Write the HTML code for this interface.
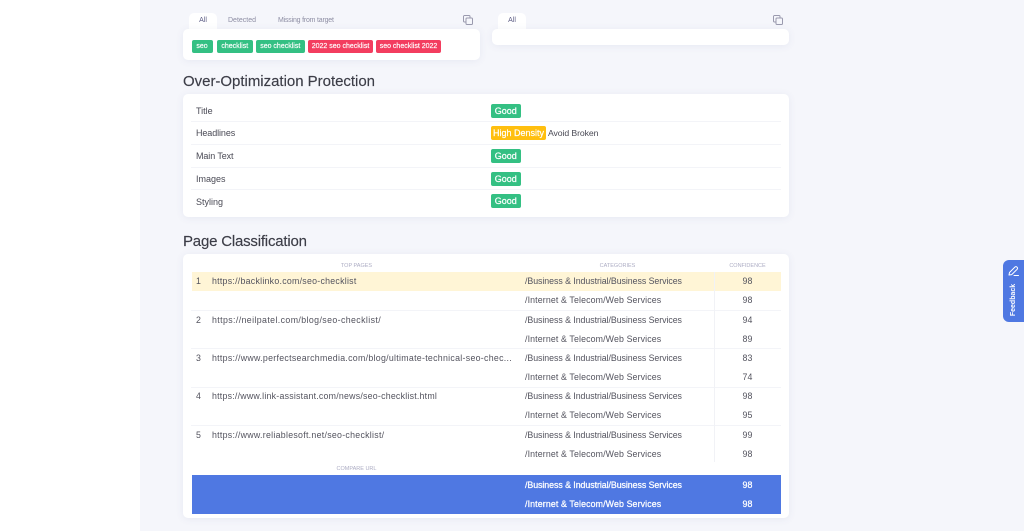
<!DOCTYPE html>
<html lang="en"><head><meta charset="utf-8"><title>Page Classification</title>
<style>
html,body{margin:0;padding:0;width:1024px;height:531px;overflow:hidden;background:#fff}
body{position:relative;font-family:"Liberation Sans",sans-serif;color:#4a4a55}
div,span.a{position:absolute;white-space:nowrap}
#bg{left:140px;top:0;width:884px;height:531px;background:#f5f6fb}
.card{background:#fff;border-radius:5px;box-shadow:0 1px 8px rgba(90,100,150,.09)}
.tab{background:#fff;border-radius:5px 5px 0 0;height:16px}
.tt{font-size:7px;color:#8d8da3;line-height:10px;height:10px}
.b{height:13px;border-radius:2px;color:#fff;font-size:7px;line-height:13px;text-align:center;top:39.5px;-webkit-text-stroke:.15px #fff}
.g{background:#34c083}.r{background:#f33d5f}
h2{position:absolute;margin:0;font-weight:normal;font-size:15px;line-height:18px;color:#3c3d47;white-space:nowrap;-webkit-text-stroke:.15px #3c3d47}
.l{left:196px;font-size:9px;line-height:12px;color:#4a4a55}
.s{font-size:9px;line-height:14px;height:14px;color:#fff;border-radius:2px;text-align:center;left:491px;-webkit-text-stroke:.2px #fff}
.sg{background:#34c083;width:29.5px}
.ln{height:1px;background:#f3f4f8}
.th{font-size:5.5px;line-height:8px;color:#adadc4;text-align:center}
.t{font-size:8.8px;line-height:12px;color:#53535e;letter-spacing:.12px}
.n{left:196px}.u{left:212px}.c{left:525px}.v{left:714px;width:67px;text-align:center}
.bz{letter-spacing:-.05px}.it{letter-spacing:.13px}
.w{color:#fff;-webkit-text-stroke:.25px #fff}
</style></head><body>
<div id="bg"></div>

<div class="tab" style="left:189px;top:13px;width:28px"></div>
<div class="tt" style="left:189px;top:16px;width:28px;text-align:center;color:#5d5d85">All</div>
<div class="tt" style="left:228px;top:16px">Detected</div>
<div class="tt" style="left:278px;top:16px;letter-spacing:-.2px">Missing from target</div>
<svg style="position:absolute;left:463px;top:15px" width="10" height="10" viewBox="0 0 10 10" fill="none" stroke="#9a9aae" stroke-width="1"><path d="M3 7H1.5a1 1 0 0 1-1-1V1.5a1 1 0 0 1 1-1H6a1 1 0 0 1 1 1V3"/><rect x="3" y="3" width="6.5" height="6.5" rx="1"/></svg>
<div class="card" style="left:183px;top:29px;width:297px;height:31px"></div>
<div class="b g" style="left:191.5px;width:21px">seo</div>
<div class="b g" style="left:216.5px;width:36.5px">checklist</div>
<div class="b g" style="left:256px;width:48.5px">seo checklist</div>
<div class="b r" style="left:308px;width:65px">2022 seo checklist</div>
<div class="b r" style="left:376px;width:65px">seo checklist 2022</div>

<div class="tab" style="left:498px;top:13px;width:28px"></div>
<div class="tt" style="left:498px;top:16px;width:28px;text-align:center;color:#5d5d85">All</div>
<svg style="position:absolute;left:773px;top:15px" width="10" height="10" viewBox="0 0 10 10" fill="none" stroke="#9a9aae" stroke-width="1"><path d="M3 7H1.5a1 1 0 0 1-1-1V1.5a1 1 0 0 1 1-1H6a1 1 0 0 1 1 1V3"/><rect x="3" y="3" width="6.5" height="6.5" rx="1"/></svg>
<div class="card" style="left:492px;top:29px;width:297px;height:16px"></div>

<h2 style="left:183px;top:73px;letter-spacing:-.02px">Over-Optimization Protection</h2>
<div class="card" style="left:183px;top:94px;width:606px;height:123px"></div>
<div class="ln" style="left:191px;top:121px;width:590px"></div>
<div class="ln" style="left:191px;top:144px;width:590px"></div>
<div class="ln" style="left:191px;top:167px;width:590px"></div>
<div class="ln" style="left:191px;top:189px;width:590px"></div>
<div class="l" style="top:105px">Title</div>
<div class="l" style="top:127px;letter-spacing:-.1px">Headlines</div>
<div class="l" style="top:150px;letter-spacing:-.1px">Main Text</div>
<div class="l" style="top:173px">Images</div>
<div class="l" style="top:196px">Styling</div>
<div class="s sg" style="top:103.5px">Good</div>
<div class="s" style="top:126px;width:55px;background:#ffbf0f">High Density</div>
<div class="l" style="left:548px;top:127px;font-size:8.7px;letter-spacing:-.1px">Avoid Broken</div>
<div class="s sg" style="top:149px">Good</div>
<div class="s sg" style="top:171.5px">Good</div>
<div class="s sg" style="top:194px">Good</div>

<h2 style="left:183px;top:233px;letter-spacing:-.2px">Page Classification</h2>
<div class="card" style="left:183px;top:254px;width:606px;height:264px"></div>
<div class="th" style="left:192px;top:262px;width:329px">TOP PAGES</div>
<div class="th" style="left:521px;top:262px;width:193px">CATEGORIES</div>
<div class="th" style="left:714px;top:262px;width:67px">CONFIDENCE</div>
<div style="left:191.5px;top:271.5px;width:589.5px;height:19.5px;background:#fff5d6"></div>
<div class="ln" style="left:191px;top:310px;width:590px"></div>
<div class="ln" style="left:191px;top:348px;width:590px"></div>
<div class="ln" style="left:191px;top:387px;width:590px"></div>
<div class="ln" style="left:191px;top:425px;width:590px"></div>
<div style="left:714px;top:272px;width:1px;height:190px;background:#f1f2f6"></div>

<div class="t n" style="top:275px">1</div><div class="t u" style="top:275px;letter-spacing:.26px">https://backlinko.com/seo-checklist</div>
<div class="t c bz" style="top:275px">/Business &amp; Industrial/Business Services</div><div class="t v" style="top:275px">98</div>
<div class="t c it" style="top:294px">/Internet &amp; Telecom/Web Services</div><div class="t v" style="top:294px">98</div>
<div class="t n" style="top:314px">2</div><div class="t u" style="top:314px;letter-spacing:.39px">https://neilpatel.com/blog/seo-checklist/</div>
<div class="t c bz" style="top:314px">/Business &amp; Industrial/Business Services</div><div class="t v" style="top:314px">94</div>
<div class="t c it" style="top:333px">/Internet &amp; Telecom/Web Services</div><div class="t v" style="top:333px">89</div>
<div class="t n" style="top:352px">3</div><div class="t u" style="top:352px;letter-spacing:.29px">https://www.perfectsearchmedia.com/blog/ultimate-technical-seo-chec...</div>
<div class="t c bz" style="top:352px">/Business &amp; Industrial/Business Services</div><div class="t v" style="top:352px">83</div>
<div class="t c it" style="top:371px">/Internet &amp; Telecom/Web Services</div><div class="t v" style="top:371px">74</div>
<div class="t n" style="top:390px">4</div><div class="t u" style="top:390px;letter-spacing:.23px">https://www.link-assistant.com/news/seo-checklist.html</div>
<div class="t c bz" style="top:390px">/Business &amp; Industrial/Business Services</div><div class="t v" style="top:390px">98</div>
<div class="t c it" style="top:409px">/Internet &amp; Telecom/Web Services</div><div class="t v" style="top:409px">95</div>
<div class="t n" style="top:429px">5</div><div class="t u" style="top:429px;letter-spacing:.28px">https://www.reliablesoft.net/seo-checklist/</div>
<div class="t c bz" style="top:429px">/Business &amp; Industrial/Business Services</div><div class="t v" style="top:429px">99</div>
<div class="t c it" style="top:448px">/Internet &amp; Telecom/Web Services</div><div class="t v" style="top:448px">98</div>

<div class="th" style="left:192px;top:465px;width:329px">COMPARE URL</div>
<div style="left:191.5px;top:475px;width:589.5px;height:38.5px;background:#4f78e2"></div>
<div class="t c bz w" style="top:479px">/Business &amp; Industrial/Business Services</div><div class="t v w" style="top:479px">98</div>
<div class="t c it w" style="top:498px">/Internet &amp; Telecom/Web Services</div><div class="t v w" style="top:498px">98</div>

<div style="left:1003px;top:260px;width:21px;height:62px;background:#4f78e2;border-radius:6px 0 0 6px"></div>
<svg style="position:absolute;left:1008px;top:265px" width="12" height="12" viewBox="0 0 12 12" fill="none" stroke="#fff" stroke-width="1" stroke-linecap="round" stroke-linejoin="round"><path d="M1.5 7.5 7 2a1.2 1.2 0 0 1 1.8 0l.4.4a1.2 1.2 0 0 1 0 1.8L3.7 9.6 1 10z"/><path d="M6 10.5h4.5"/></svg>
<div style="left:1003px;top:283px;width:21px;height:34px;"><span class="a" style="left:50%;top:50%;transform:translate(-50%,-50%) rotate(-90deg);font-size:7px;font-weight:bold;color:#fff;line-height:10px">Feedback</span></div>
</body></html>
